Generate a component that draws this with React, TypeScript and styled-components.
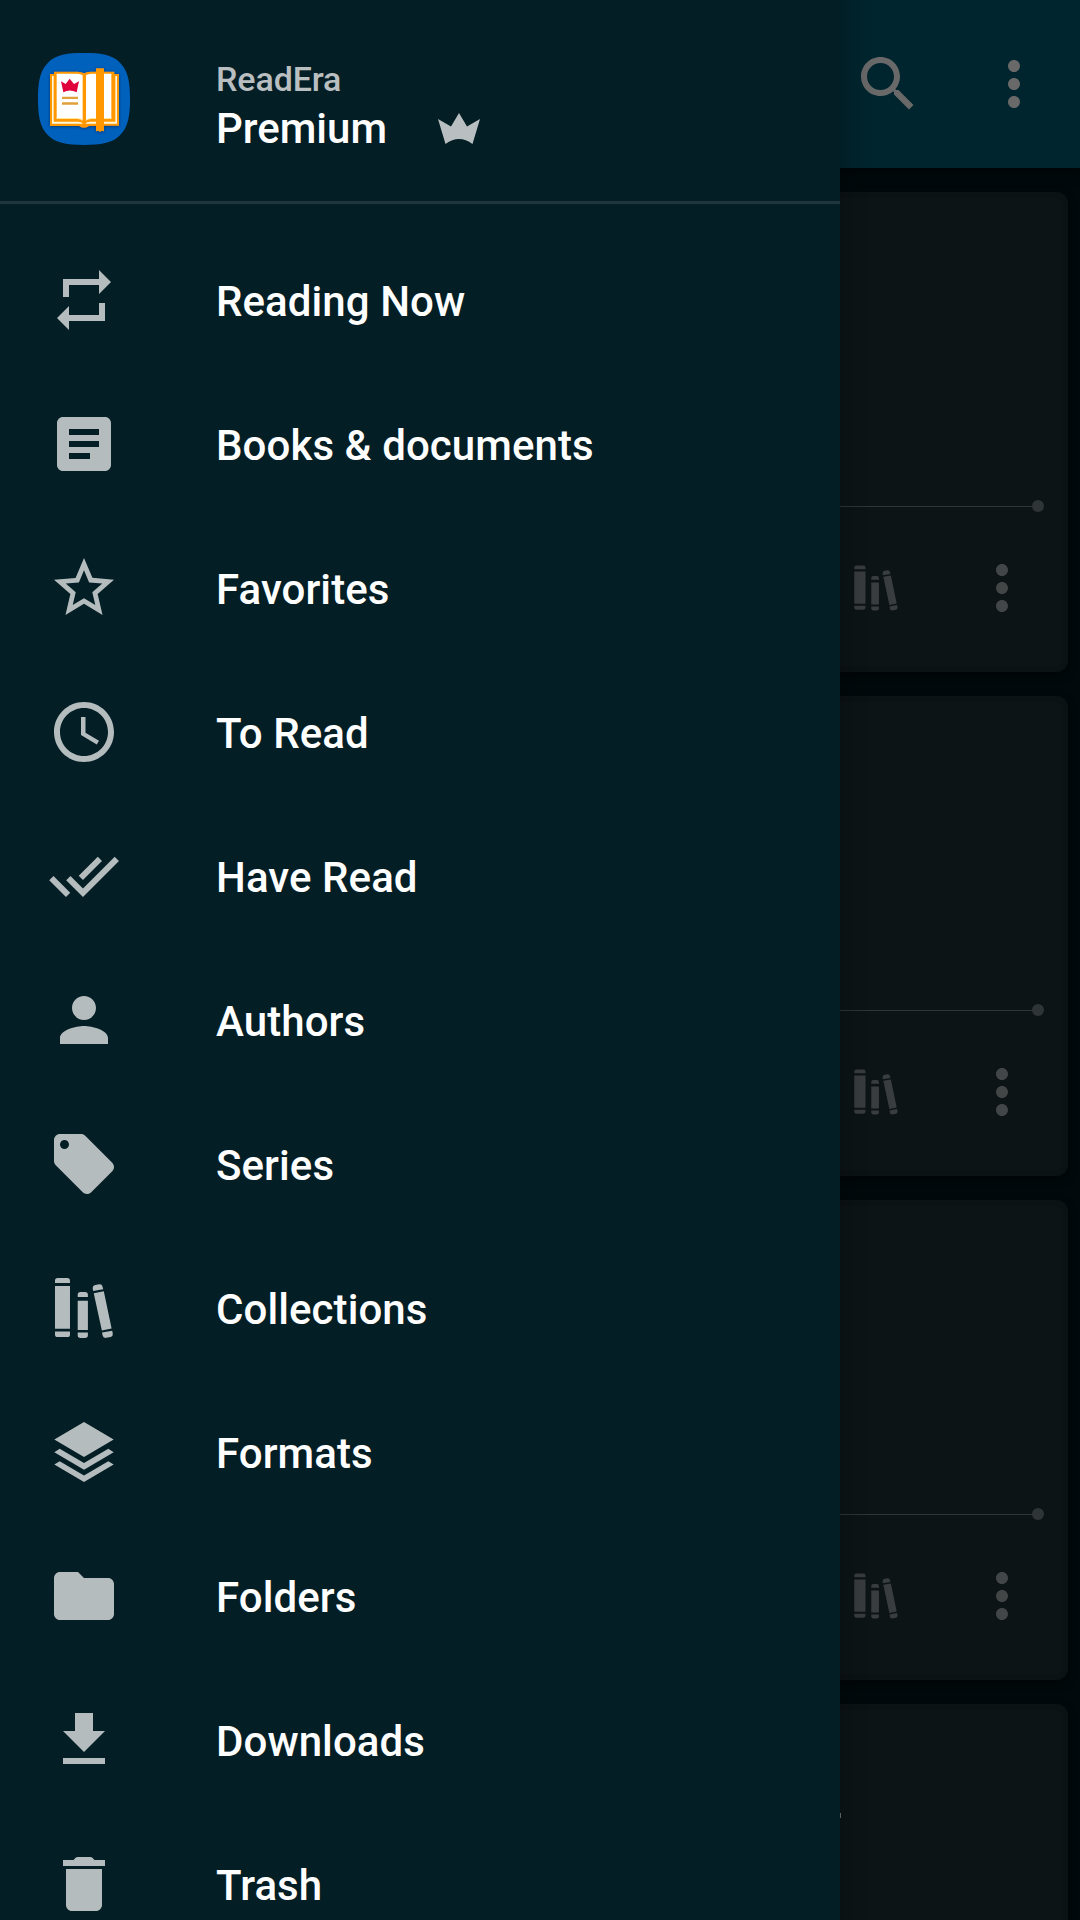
import React from "react";
import styled, { createGlobalStyle } from "styled-components";

const GlobalStyle = createGlobalStyle`
  html, body { margin: 0; padding: 0; background: #01080b; }
  *, *::before, *::after { box-sizing: border-box; }
`;

const Screen = styled.div`
  position: relative;
  width: 1080px;
  height: 1920px;
  overflow: hidden;
  background: #01090c;
  font-family: Roboto, "Noto Sans", sans-serif;
`;

const Library = styled.main`
  display: flex;
  flex-direction: column;
  height: 100%;
`;

const AppBar = styled.header`
  display: flex;
  flex: none;
  align-items: center;
  justify-content: flex-end;
  gap: 54px;
  height: 168px;
  padding-right: 30px;
  background: #00252e;
  color: #696969;
  box-shadow: 0 2px 12px rgba(0, 0, 0, 0.6);
`;

const CardList = styled.section`
  display: flex;
  flex-direction: column;
  gap: 24px;
  padding: 24px 12px 0;
`;

const Card = styled.article`
  display: flex;
  flex: none;
  flex-direction: column;
  justify-content: flex-end;
  height: 480px;
  padding-bottom: 8px;
  border-radius: 12px;
  background: #0c1416;
  box-shadow: 0 3px 8px rgba(0, 0, 0, 0.5), inset 0 0 0 6px #0b1214;
`;

const TitleEdge = styled.div`
  width: 1px;
  height: 5px;
  margin: 109px 0 auto 828px;
  background: #6c7173;
`;

const Progress = styled.div`
  display: flex;
  align-items: center;
  height: 12px;
  padding: 0 24px;
`;

const ProgressTrack = styled.div`
  flex: 1;
  height: 1px;
  background: #2f3538;
`;

const ProgressKnob = styled.div`
  width: 12px;
  height: 12px;
  border-radius: 50%;
  background: #2f3437;
`;

const CardActions = styled.div`
  display: flex;
  align-items: center;
  justify-content: flex-end;
  gap: 63px;
  height: 152px;
  padding-right: 30px;
`;

const Drawer = styled.nav`
  position: absolute;
  top: 0;
  left: 0;
  width: 840px;
  height: 1920px;
  overflow: hidden;
  background: #041e25;
`;

const DrawerShadow = styled.div`
  position: absolute;
  top: 0;
  left: 840px;
  width: 36px;
  height: 1920px;
  background: linear-gradient(to right, rgba(0, 0, 0, 0.16), rgba(0, 0, 0, 0.06) 50%, transparent);
`;

const DrawerHeader = styled.div`
  display: flex;
  align-items: flex-start;
  height: 204px;
  padding: 53px 0 0 38px;
  border-bottom: 3px solid #21353c;
`;

const Brand = styled.div`
  display: flex;
  flex-direction: column;
  margin-left: 86px;
  font-weight: 500;
`;

const AppName = styled.span`
  height: 50px;
  line-height: 53px;
  font-size: 34px;
  letter-spacing: -0.1px;
  color: #b9bfc1;
`;

const PlanRow = styled.div`
  display: flex;
  align-items: center;
  gap: 51px;
  height: 51px;
  line-height: 51px;
  font-size: 42px;
  color: #ffffff;
`;

const Menu = styled.ul`
  display: flex;
  flex-direction: column;
  margin: 0;
  padding: 24px 0 0;
  list-style: none;
`;

const MenuItem = styled.li`
  display: flex;
  flex: none;
  align-items: center;
  gap: 96px;
  height: 144px;
  padding-left: 48px;
  color: #b4bcbe;
`;

const MenuLabel = styled.span`
  padding-top: 3px;
  font-size: 42px;
  font-weight: 500;
  line-height: 48px;
  letter-spacing: 0.08px;
  color: #ffffff;
  white-space: nowrap;
`;

const Glyph = styled.svg<{ $size?: number; $tone?: string }>`
  display: block;
  flex: none;
  width: ${(p) => p.$size ?? 72}px;
  height: ${(p) => p.$size ?? 72}px;
  fill: currentColor;
  color: ${(p) => p.$tone ?? "inherit"};
`;

const Logo = styled.svg`
  display: block;
  flex: none;
  width: 92px;
  height: 92px;
`;

const Crown = styled.svg`
  display: block;
  width: 42px;
  height: 31px;
  fill: #b9bfc1;
`;

const MORE =
  "M12 8c1.1 0 2-.9 2-2s-.9-2-2-2-2 .9-2 2 .9 2 2 2zm0 2c-1.1 0-2 .9-2 2s.9 2 2 2 2-.9 2-2-.9-2-2-2zm0 6c-1.1 0-2 .9-2 2s.9 2 2 2 2-.9 2-2-.9-2-2-2z";
const SEARCH =
  "M15.5 14h-.79l-.28-.27C15.41 12.59 16 11.11 16 9.5 16 5.91 13.09 3 9.5 3S3 5.91 3 9.5 5.91 16 9.5 16c1.61 0 3.09-.59 4.23-1.57l.27.28v.79l5 4.99L20.49 19l-4.99-5zm-6 0C7.01 14 5 11.99 5 9.5S7.01 5 9.5 5 14 7.01 14 9.5 11.99 14 9.5 14z";
const BOOKS =
  "M2.33 3.7V2.9Q2.33 2 3.23 2H6.43Q7.33 2 7.33 2.9V3.7ZM2.33 4.65H7.33V18.95H2.33ZM2.33 19.85H7.33V20.8Q7.33 21.7 6.43 21.7H3.23Q2.33 21.7 2.33 20.8ZM9.9 8.35V7.6Q9.9 6.65 10.85 6.65H12.35Q13.3 6.65 13.3 7.6V8.35ZM9.9 9.6H13.3V19.3H9.9ZM9.9 20.2H13.3V21.1Q13.3 22 12.35 22H10.85Q9.9 22 9.9 21.1ZM15.05 6.35L14.92 5.55Q14.8 4.55 15.75 4.35L17.1 4.1Q18 4 18.2 4.9L18.4 5.75ZM15.25 7.05L18.6 6.45L21.2 18.85L17.95 19.5ZM18 20.2L21.4 19.55L21.6 20.6Q21.7 21.45 20.9 21.65L19.35 21.95Q18.4 22.05 18.2 21.2Z";

const MENU: { label: string; path: string }[] = [
  { label: "Reading Now", path: "M7 7h10v3l4-4-4-4v3H5v6h2V7zm10 10H7v-3l-4 4 4 4v-3h12v-6h-2v4z" },
  {
    label: "Books & documents",
    path: "M19 3H5c-1.1 0-2 .9-2 2v14c0 1.1.9 2 2 2h14c1.1 0 2-.9 2-2V5c0-1.1-.9-2-2-2zm-5 14H7v-2h7v2zm3-4H7v-2h10v2zm0-4H7V7h10v2z",
  },
  {
    label: "Favorites",
    path: "M22 9.24l-7.19-.62L12 2 9.19 8.63 2 9.24l5.46 4.73L5.82 21 12 17.27 18.18 21l-1.63-7.03L22 9.24zM12 15.4l-3.76 2.27 1-4.28-3.32-2.88 4.38-.38L12 6.1l1.71 4.04 4.38.38-3.32 2.88 1 4.28L12 15.4z",
  },
  {
    label: "To Read",
    path: "M11.99 2C6.47 2 2 6.48 2 12s4.47 10 9.99 10C17.52 22 22 17.52 22 12S17.52 2 11.99 2zM12 20c-4.42 0-8-3.58-8-8s3.58-8 8-8 8 3.58 8 8-3.58 8-8 8zM12.5 7H11v6l5.25 3.15.75-1.23-4.5-2.67z",
  },
  {
    label: "Have Read",
    path: "M18 7l-1.41-1.41-6.34 6.34 1.41 1.41L18 7zm4.24-1.41L11.66 16.17 7.48 12l-1.41 1.41L11.66 19l12-12-1.42-1.41zM.41 13.41L6 19l1.41-1.41L1.83 12 .41 13.41z",
  },
  {
    label: "Authors",
    path: "M12 12c2.21 0 4-1.79 4-4s-1.79-4-4-4-4 1.79-4 4 1.79 4 4 4zm0 2c-2.67 0-8 1.34-8 4v2h16v-2c0-2.66-5.33-4-8-4z",
  },
  {
    label: "Series",
    path: "M21.41 11.58l-9-9C12.05 2.22 11.55 2 11 2H4c-1.1 0-2 .9-2 2v7c0 .55.22 1.05.59 1.42l9 9c.36.36.86.58 1.41.58.55 0 1.05-.22 1.41-.59l7-7c.37-.36.59-.86.59-1.41 0-.55-.23-1.06-.59-1.42zM5.5 7C4.67 7 4 6.33 4 5.5S4.67 4 5.5 4 7 4.67 7 5.5 6.33 7 5.5 7z",
  },
  { label: "Collections", path: BOOKS },
  {
    label: "Formats",
    path: "M12 2L21.9 7.83L12 13.67L2.1 7.83ZM2.1 12.05L3.9 10.9L12 15.65L20.1 10.9L21.9 12.05L12 17.9ZM2.1 16.2L3.9 15.05L12 19.8L20.1 15.05L21.9 16.2L12 22Z",
  },
  { label: "Folders", path: "M10 4H4c-1.1 0-1.99.9-1.99 2L2 18c0 1.1.9 2 2 2h16c1.1 0 2-.9 2-2V8c0-1.1-.9-2-2-2h-8l-2-2z" },
  { label: "Downloads", path: "M19 9h-4V3H9v6H5l7 7 7-7zM5 18v2h14v-2H5z" },
  {
    label: "Trash",
    path: "M6 19c0 1.1.9 2 2 2h8c1.1 0 2-.9 2-2V7H6v12zM19 4h-3.5l-.71-.71c-.18-.18-.44-.29-.7-.29H9.91c-.26 0-.52.11-.7.29L8.5 4H5v2h14V4z",
  },
];

function Icon({ path, size, tone }: { path: string; size?: number; tone?: string }) {
  return (
    <Glyph viewBox="0 0 24 24" $size={size} $tone={tone} aria-hidden="true">
      <path d={path} />
    </Glyph>
  );
}

function AppLogo() {
  return (
    <Logo viewBox="24 40 276 276" aria-hidden="true">
      <defs>
        <filter id="lift" x="-10%" y="-10%" width="120%" height="125%">
          <feDropShadow dx="0" dy="2" stdDeviation="4" floodColor="#002050" floodOpacity="0.7" />
        </filter>
      </defs>
      <path
        fill="#0061bd"
        d="M162 40C212 40 246 44 270 69C295 94 300 128 300 178C300 228 295 262 270 287C246 311 212 316 162 316C112 316 78 311 54 287C29 262 24 228 24 178C24 128 29 94 54 69C78 44 112 40 162 40Z"
      />
      <g filter="url(#lift)">
        <path
          fill="#ff9800"
          d="M60 103H72V96H142Q156 96 162 101Q168 96 182 96H198V86H222V96H253V103H267V258H222V275L216 273L210 276L204 273L198 275V259H177Q172 264 162 264Q152 264 148 259H60Z"
        />
      </g>
      <path
        fill="#fff7dc"
        d="M66 109H71V246H144Q155 246 159 252H66ZM256 109H261V252H222V246H256ZM198 246V252H166Q170 246 181 246Z"
      />
      <path fill="#ffffff" d="M80 102H142Q153 102 158 107V242Q153 237 142 237H80ZM168 107Q173 102 184 102H198V237H184Q173 237 168 242ZM222 102H244V237H222Z" />
      <path fill="#ffe49a" d="M80 235H142Q153 235 158 240V243Q153 238 142 238H80ZM168 240Q173 235 184 235H198V238H184Q173 238 168 243ZM222 235H244V238H222Z" />
      <path fill="#df003c" d="M93 125L107 133L119 117L132 133L147 125L140 158Q119 147 100 158Z" />
      <path fill="#e0a03c" d="M96 171H144V178H96ZM96 188H144V195H96Z" />
    </Logo>
  );
}

function BookCard({ longTitle }: { longTitle: boolean }) {
  return (
    <Card>
      {longTitle && <TitleEdge />}
      <Progress>
        <ProgressTrack />
        <ProgressKnob />
      </Progress>
      <CardActions>
        <Icon path={BOOKS} size={54} tone="#3a3d40" />
        <Icon path={MORE} tone="#434647" />
      </CardActions>
    </Card>
  );
}

export default function App() {
  return (
    <Screen>
      <GlobalStyle />
      <Library>
        <AppBar>
          <Icon path={SEARCH} />
          <Icon path={MORE} />
        </AppBar>
        <CardList>
          {[0, 1, 2, 3].map((id) => (
            <BookCard key={id} longTitle={id === 3} />
          ))}
        </CardList>
      </Library>
      <DrawerShadow />
      <Drawer>
        <DrawerHeader>
          <AppLogo />
          <Brand>
            <AppName>ReadEra</AppName>
            <PlanRow>
              Premium
              <Crown viewBox="0 0 42 31" aria-hidden="true">
                <path d="M0 6L13 13.5L21 0L29 13.5L42 6L34.5 31Q21 21 7.5 31Z" />
              </Crown>
            </PlanRow>
          </Brand>
        </DrawerHeader>
        <Menu>
          {MENU.map((item) => (
            <MenuItem key={item.label}>
              <Icon path={item.path} />
              <MenuLabel>{item.label}</MenuLabel>
            </MenuItem>
          ))}
        </Menu>
      </Drawer>
    </Screen>
  );
}
